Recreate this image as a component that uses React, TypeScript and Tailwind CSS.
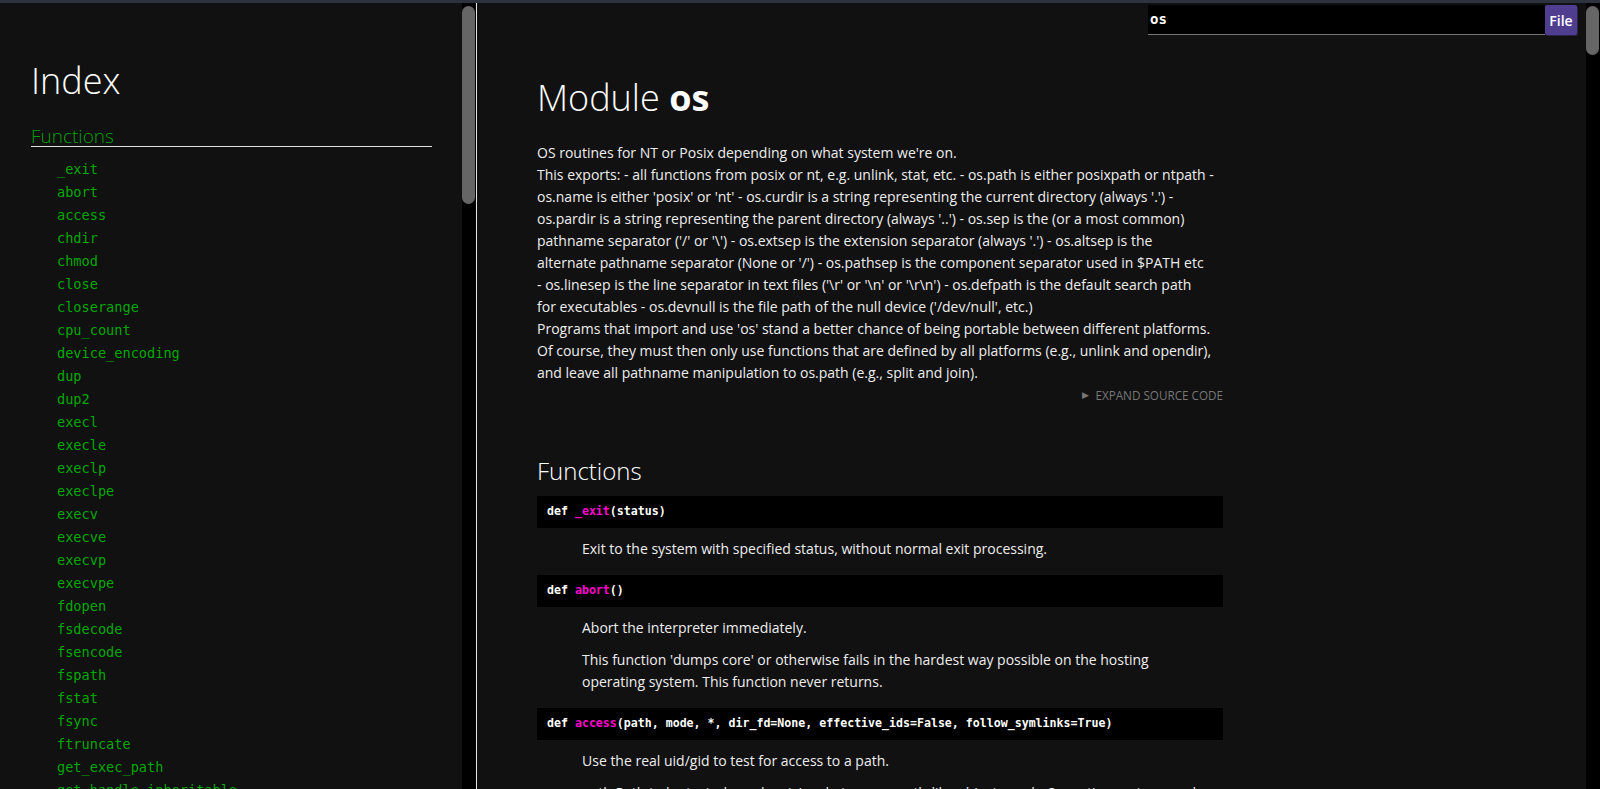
import React from 'react';

const sans = "font-['Open_Sans','Noto_Sans',sans-serif]";
const mono = "font-['DejaVu_Sans_Mono','Liberation_Mono',monospace]";

const indexItems = [
  '_exit', 'abort', 'access', 'chdir', 'chmod', 'close', 'closerange', 'cpu_count',
  'device_encoding', 'dup', 'dup2', 'execl', 'execle', 'execlp', 'execlpe', 'execv',
  'execve', 'execvp', 'execvpe', 'fdopen', 'fsdecode', 'fsencode', 'fspath', 'fstat',
  'fsync', 'ftruncate', 'get_exec_path', 'get_handle_inheritable', 'get_inheritable',
];

// module docstring, broken where the reference wraps it
const intro: string[][] = [
  ["OS routines for NT or Posix depending on what system we're on."],
  [
    'This exports: - all functions from posix or nt, e.g. unlink, stat, etc. - os.path is either posixpath or ntpath -',
    "os.name is either 'posix' or 'nt' - os.curdir is a string representing the current directory (always '.') -",
    "os.pardir is a string representing the parent directory (always '..') - os.sep is the (or a most common)",
    "pathname separator ('/' or '\\') - os.extsep is the extension separator (always '.') - os.altsep is the",
    "alternate pathname separator (None or '/') - os.pathsep is the component separator used in $PATH etc",
    "- os.linesep is the line separator in text files ('\\r' or '\\n' or '\\r\\n') - os.defpath is the default search path",
    "for executables - os.devnull is the file path of the null device ('/dev/null', etc.)",
  ],
  [
    "Programs that import and use 'os' stand a better chance of being portable between different platforms.",
    'Of course, they must then only use functions that are defined by all platforms (e.g., unlink and opendir),',
    'and leave all pathname manipulation to os.path (e.g., split and join).',
  ],
];

interface Func {
  name: string;
  args: string;
  doc: string[][];
}

const functions: Func[] = [
  {
    name: '_exit',
    args: '(status)',
    doc: [['Exit to the system with specified status, without normal exit processing.']],
  },
  {
    name: 'abort',
    args: '()',
    doc: [
      ['Abort the interpreter immediately.'],
      [
        "This function 'dumps core' or otherwise fails in the hardest way possible on the hosting",
        'operating system. This function never returns.',
      ],
    ],
  },
  {
    name: 'access',
    args: '(path, mode, *, dir_fd=None, effective_ids=False, follow_symlinks=True)',
    doc: [
      ['Use the real uid/gid to test for access to a path.'],
      ['path Path to be tested; can be string, bytes, or a path-like object. mode Operating-system mode'],
    ],
  },
];

function Lines({ lines }: { lines: string[] }) {
  return (
    <>
      {lines.map((l, i) => (
        <React.Fragment key={i}>
          {i > 0 && <br />}
          {l}
        </React.Fragment>
      ))}
    </>
  );
}

function Sidebar() {
  return (
    <nav className={`w-[462px] overflow-hidden pl-[31px] pr-[30px] pt-[55px] ${sans}`}>
      <h1 className="text-[36px] leading-[46px] font-light text-white">Index</h1>
      <h3 className="mt-[23px] text-[19px] leading-[19px] font-light text-[#00a000] border-b border-[#e0e0e0]">
        Functions
      </h3>
      <ul className="mt-[11px] pl-[26px]">
        {indexItems.map((item) => (
          <li key={item} className={`h-[23px] leading-[23px] text-[13.6px] text-[#00a800] ${mono}`}>
            {item}
          </li>
        ))}
      </ul>
    </nav>
  );
}

function Scrollbar({ thumb }: { thumb: string }) {
  return (
    <div className="w-[14px] bg-black pt-[3px]">
      <div className={`w-[13px] rounded-full bg-[#666] ${thumb}`} />
    </div>
  );
}

function FunctionEntry({ fn }: { fn: Func }) {
  return (
    <div>
      <div className={`h-[32px] bg-black px-[10px] flex items-center text-[11.6px] font-bold text-white whitespace-nowrap ${mono}`}>
        <span>def&nbsp;</span>
        <span className="text-[#f0c]">{fn.name}</span>
        <span>{fn.args}</span>
      </div>
      <div className="pl-[45px] pt-[10px] pb-[15px] flex flex-col gap-[10px]">
        {fn.doc.map((p, i) => (
          <p key={i} className="leading-[22px] whitespace-nowrap">
            <Lines lines={p} />
          </p>
        ))}
      </div>
    </div>
  );
}

function Main() {
  return (
    <main className={`relative flex-1 overflow-hidden pl-[60px] pt-[72px] text-[14px] text-[#eee] ${sans}`}>
      <div className="absolute top-[2px] right-[9px] flex">
        <div className={`w-[397px] h-[30px] bg-black border-b border-[#777] pl-[2px] flex items-center text-[14px] font-bold text-white ${mono}`}>
          os
        </div>
        <button className="w-[32px] h-[30px] rounded-[2px] bg-[#4f3d8f] shadow-[1px_1px_0_#2a2248] text-white text-[14px] font-semibold">
          File
        </button>
      </div>

      <div className="w-[686px]">
        <h1 className="text-[36px] leading-[46px] font-light text-white">
          Module <span className="font-bold">os</span>
        </h1>

        <p className="mt-[21px] leading-[22px] whitespace-nowrap">
          {intro.map((block, i) => (
            <React.Fragment key={i}>
              {i > 0 && <br />}
              <Lines lines={block} />
            </React.Fragment>
          ))}
        </p>

        <div className="mt-[3px] flex justify-end items-center gap-[6px] text-[11.7px] leading-[16px] text-[#777] uppercase">
          <span className="text-[9px]">▶</span>
          <span>Expand source code</span>
        </div>

        <h2 className="mt-[52px] text-[24px] leading-[32px] font-light text-white">Functions</h2>

        <div className="mt-[9px]">
          {functions.map((fn) => (
            <FunctionEntry key={fn.name} fn={fn} />
          ))}
        </div>
      </div>
    </main>
  );
}

export default function App() {
  return (
    <div className="w-[1600px] h-[789px] overflow-hidden bg-[#111] flex flex-col">
      <div className="h-[3px] bg-[#2e323e]" />
      <div className="flex flex-1 min-h-0">
        <Sidebar />
        <Scrollbar thumb="h-[198px]" />
        <div className="w-[1px] bg-[#e5e5e5]" />
        <Main />
        <Scrollbar thumb="h-[49px]" />
      </div>
    </div>
  );
}
